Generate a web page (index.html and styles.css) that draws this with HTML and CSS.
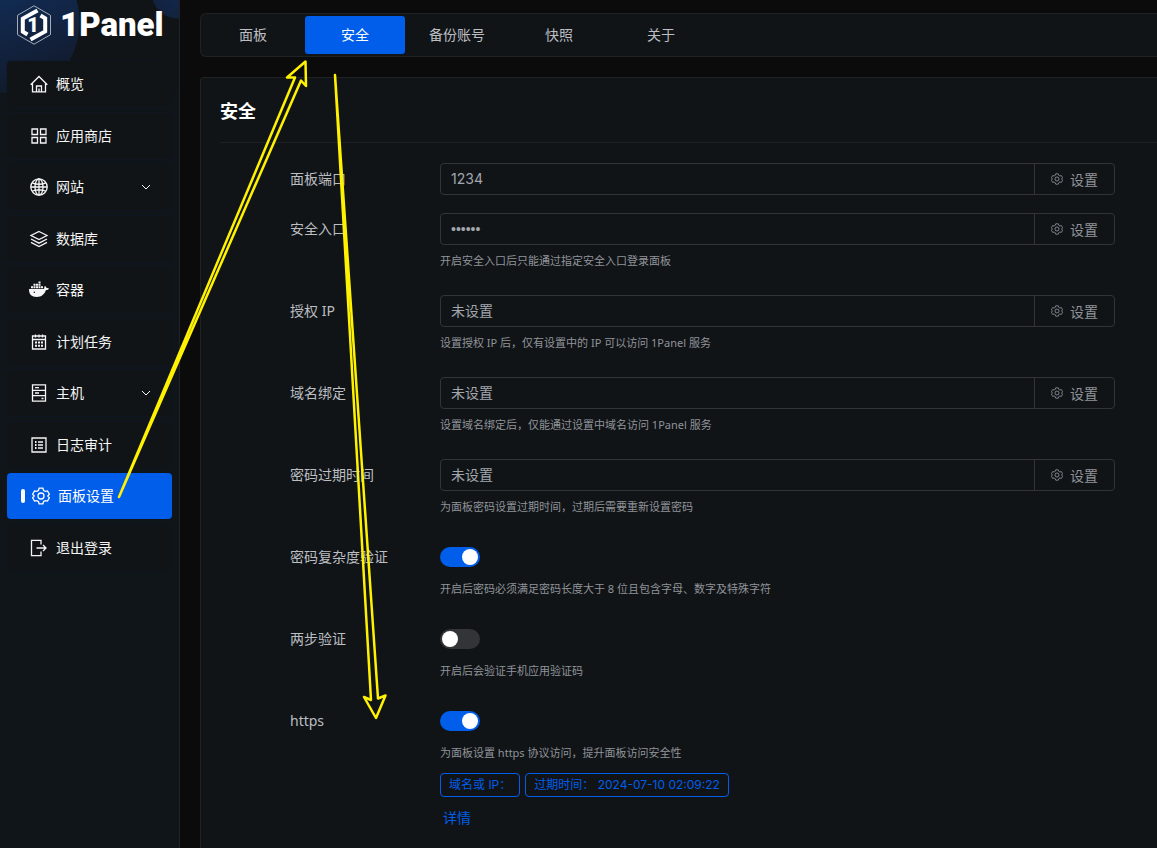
FILE: index.html
```html
<!DOCTYPE html>
<html lang="zh-CN">
<head>
<meta charset="utf-8">
<title>1Panel</title>
<link rel="stylesheet" href="styles.css">
</head>
<body>
<svg class="sprite" aria-hidden="true">
  <symbol id="gear" viewBox="0 0 18 18"><path d="M7.1 1.2h3.8l.7 2.3 1.6.9 2.3-.5 1.9 3.3-1.6 1.8 1.6 1.8-1.9 3.3-2.3-.5-1.6.9-.7 2.3H7.1l-.7-2.3-1.6-.9-2.3.5-1.9-3.3L2.200 9 .6 7.200l1.900-3.300 2.300.5 1.600-.9z"/><circle cx="9" cy="9" r="3"/></symbol>
  <symbol id="chevron" viewBox="0 0 10 10"><path d="M1 3l4 4 4-4"/></symbol>
</svg>
<div class="layout">
  <aside class="sidebar">
    <div class="logo">
      <svg class="logo-mark" viewBox="0 0 36 40" role="img" aria-label="logo">
        <path class="thin" d="M18 .8l16.500 9.500v19.400L18 39.200 1.500 29.700V10.300z"/>
        <path class="band" d="M21.500 5.500L6.800 13.600v13l4.700 2.900M14.500 34.500l14.700-8.100v-13l-4.700-2.900"/>
        <text x="17" y="27" text-anchor="middle">1</text>
      </svg>
      <span class="logo-text">1Panel</span>
    </div>
    <nav class="menu">
      <a href="#" class="item"><svg class="icon" viewBox="0 0 18 18"><path d="M.7 9.700L9 1.500l8.300 8.200M2.500 8.500v8.300h13V8.500M6.500 16.800v-5.800h5v5.800M9 13.500v3"/></svg>概览</a>
      <a href="#" class="item"><svg class="icon" viewBox="0 0 18 18"><path d="M2 2h5.500v5.500H2zM10.500 2H16v5.500h-5.500zM2 10.500h5.500V16H2zM10.500 10.500H16V16h-5.500z"/></svg>应用商店</a>
      <a href="#" class="item"><svg class="icon" viewBox="0 0 18 18"><circle cx="9" cy="9" r="8.200"/><ellipse cx="9" cy="9" rx="4" ry="8.200"/><path d="M9 .8v16.400M.8 9h16.400M2.200 4.800c4 1.700 9.600 1.700 13.600 0M2.200 13.200c4-1.700 9.600-1.700 13.600 0"/></svg>网站<svg class="chevron"><use href="#chevron"/></svg></a>
      <a href="#" class="item"><svg class="icon" viewBox="0 0 18 18"><path d="M9 1.500l8 4-8 4-8-4zM1 9l8 4.200L17 9M1 12.300l8 4.200 8-4.200"/></svg>数据库</a>
      <a href="#" class="item"><svg class="icon solid" viewBox="0 0 18 18"><path d="M-1 8h14.500c.8-.2 1-1 .7-2l.8-1c1 .6 1.400 1.300 1.500 2 .9-.2 1.800 0 2.500.4-.5 1.200-1.600 1.700-3 1.700C14.500 13.500 11.500 16 6.800 16 1.500 16-1.300 13-1 8z"/><path d="M1 5.200h2v2H1zM3.500 5.200h2v2h-2zM6 5.200h2v2H6zM8.500 5.200h2v2h-2zM11 5.200h2v2h-2zM3.500 2.700h2v2h-2zM6 2.700h2v2H6zM8.500 2.700h2v2h-2zM8.500.4h2v1.800h-2z"/><circle class="eye" cx="4.300" cy="11.200" r=".7"/></svg>容器</a>
      <a href="#" class="item"><svg class="icon" viewBox="0 0 18 18"><path d="M2.500 3h13v13h-13zM2.500 6.500h13M5.500 1.500v3M9 1.500v3M12.500 1.500v3"/><path class="dots" d="M5 9.500h2M8 9.500h2M11 9.500h2M5 12.700h2M8 12.700h2M11 12.700h2"/></svg>计划任务</a>
      <a href="#" class="item"><svg class="icon" viewBox="0 0 18 18"><path d="M2.500.8h13v16.400h-13zM2.500 6.300h13M2.500 11.700h13M5 3.600h4M5 9h4M11.500 14.500h2"/></svg>主机<svg class="chevron"><use href="#chevron"/></svg></a>
      <a href="#" class="item"><svg class="icon" viewBox="0 0 18 18"><path d="M2 2h14v14H2zM8 6h5M8 9h5M8 12h5"/><path class="dots" d="M5 6h1.500M5 9h1.500M5 12h1.500"/></svg>日志审计</a>
      <a href="#" class="item active" aria-current="page"><svg class="icon"><use href="#gear"/></svg>面板设置</a>
      <a href="#" class="item"><svg class="icon" viewBox="0 0 18 18"><path d="M11 5.500V1.300H1.500v15.400H11v-4.200M6.500 9H16M13 6l3 3-3 3"/></svg>退出登录</a>
    </nav>
  </aside>
  <main class="content">
    <nav class="tabs">
      <button type="button" class="tab">面板</button>
      <button type="button" class="tab selected">安全</button>
      <button type="button" class="tab">备份账号</button>
      <button type="button" class="tab">快照</button>
      <button type="button" class="tab">关于</button>
    </nav>
    <section class="card">
      <h1 class="title">安全</h1>
      <form class="form">
        <div class="row">
          <label for="port">面板端口</label>
          <div class="field"><input id="port" class="number" type="text" value="1234" readonly><button type="button"><svg><use href="#gear"/></svg>设置</button></div>
        </div>
        <div class="row">
          <label for="entrance">安全入口</label>
          <div class="field"><input id="entrance" class="secret" type="password" value="123456" readonly><button type="button"><svg><use href="#gear"/></svg>设置</button></div>
          <p class="hint">开启安全入口后只能通过指定安全入口登录面板</p>
        </div>
        <div class="row">
          <label for="ip">授权 IP</label>
          <div class="field"><input id="ip" type="text" value="未设置" readonly><button type="button"><svg><use href="#gear"/></svg>设置</button></div>
          <p class="hint">设置授权 IP 后，仅有设置中的 IP 可以访问 1Panel 服务</p>
        </div>
        <div class="row">
          <label for="domain">域名绑定</label>
          <div class="field"><input id="domain" type="text" value="未设置" readonly><button type="button"><svg><use href="#gear"/></svg>设置</button></div>
          <p class="hint">设置域名绑定后，仅能通过设置中域名访问 1Panel 服务</p>
        </div>
        <div class="row">
          <label for="expire">密码过期时间</label>
          <div class="field"><input id="expire" type="text" value="未设置" readonly><button type="button"><svg><use href="#gear"/></svg>设置</button></div>
          <p class="hint">为面板密码设置过期时间，过期后需要重新设置密码</p>
        </div>
        <div class="row">
          <label for="complex">密码复杂度验证</label>
          <div class="toggle"><input id="complex" class="switch" type="checkbox" role="switch" checked></div>
          <p class="hint">开启后密码必须满足密码长度大于 8 位且包含字母、数字及特殊字符</p>
        </div>
        <div class="row">
          <label for="mfa">两步验证</label>
          <div class="toggle"><input id="mfa" class="switch" type="checkbox" role="switch"></div>
          <p class="hint">开启后会验证手机应用验证码</p>
        </div>
        <div class="row">
          <label for="https">https</label>
          <div class="toggle"><input id="https" class="switch" type="checkbox" role="switch" checked></div>
          <p class="hint">为面板设置 https 协议访问，提升面板访问安全性</p>
          <div class="tags"><span class="tag">域名或 IP：</span><span class="tag">过期时间： 2024-07-10 02:09:22</span></div>
          <a href="#" class="detail">详情</a>
        </div>
      </form>
    </section>
  </main>
</div>
<svg class="arrows" width="400" height="730" viewBox="0 0 400 730" aria-hidden="true">
  <path d="M119 497L295 77.500 287 77.500 305.500 61.500 306 86 301 80.500z"/>
  <path d="M335 75L371 700 364 697 376 718 385.500 695.500 378 698.500z"/>
</svg>
</body>
</html>
```
FILE: styles.css
```css
* { box-sizing: border-box; }

body {
  margin: 0;
  background: #0b0b0b;
  color: #bcbec2;
  font: 14px/20px "Noto Sans", "Noto Sans CJK SC", sans-serif;
  overflow: hidden;
}

a { text-decoration: none; }
button, input { font: inherit; }
.sprite { position: absolute; width: 0; height: 0; }
svg { fill: none; stroke: currentColor; stroke-width: 1.3; overflow: visible; }

.layout { display: flex; min-height: 100vh; }

.sidebar {
  flex: 0 0 180px;
  border-right: 1px solid #202224;
  background:
    radial-gradient(circle at 178px -8px, #12284e 0, #12233f 26px, transparent 27px) no-repeat 0 0 / 100% 93px,
    radial-gradient(circle at 0 22px, transparent 79px, #101417 80px) no-repeat 0 0 / 100% 93px,
    linear-gradient(160deg, #112b52, #12203a 40%, #101721 75%) no-repeat 0 0 / 100% 93px,
    #10151a;
}

.logo {
  display: flex;
  align-items: center;
  gap: 8px;
  height: 61px;
  padding: 0 0 12px 16px;
  color: #fff;
}
.logo-mark { width: 36px; height: 40px; flex: none; }
.logo-mark .thin { stroke-width: 1; stroke: #a3acb8; }
.logo-mark .band { stroke-width: 4; }
.logo-mark text { fill: #fff; stroke: none; font: 900 20px Roboto, sans-serif; }
.logo-text { font: 900 33px/48px Roboto, sans-serif; }

.menu { display: flex; flex-direction: column; padding: 0 7px; }
.item {
  position: relative;
  display: flex;
  align-items: center;
  gap: 8px;
  height: 46px;
  margin-bottom: 5px;
  padding: 0 21px 0 23px;
  border-radius: 4px;
  background: #101417;
  box-shadow: 0 0 2px #111c33;
  color: #f5f5f5;
}
.item:nth-child(odd) { margin-bottom: 6px; }
.icon { width: 18px; height: 18px; }
.icon.solid { fill: currentColor; stroke: none; }
.icon .eye { fill: #101417; }
.icon .dots { stroke-width: 2; }
.chevron { width: 10px; height: 10px; margin-left: auto; stroke-width: 1; }
.item.active { padding-left: 25px; background: #005eeb; color: #fff; box-shadow: none; }
.item.active::before {
  content: "";
  position: absolute;
  left: 14px;
  top: 16px;
  width: 4px;
  height: 14px;
  border-radius: 2px;
  background: #fff;
}

.content { flex: 1; min-width: 0; padding: 13px 0 0 20px; display: flex; flex-direction: column; gap: 20px; }

.tabs {
  display: flex;
  gap: 2px;
  height: 44px;
  padding: 2px;
  border: 1px solid #1f2225;
  border-right: 0;
  border-radius: 6px 0 0 6px;
  background: #101417;
}
.tab { width: 100px; height: 38px; padding: 0; border: 0; border-radius: 3px; background: none; color: #bcbec2; }
.tab.selected { background: #005eeb; color: #fff; }

.card {
  flex: 1;
  padding-left: 19px;
  border: 1px solid #1f2225;
  border-width: 1px 0 0 1px;
  border-radius: 4px 0 0 0;
  background: #101417;
}
.title { margin: 0; height: 65px; border-bottom: 1px solid #1e2124; color: #fff; font-size: 18px; line-height: 66px; font-weight: 700; }

.form { display: flex; flex-direction: column; gap: 18px; padding: 20px 42px 20px 70px; }
.row { display: grid; grid-template-columns: 150px 1fr; }
.row > label { line-height: 32px; }
.row > :not(label) { grid-column: 2; }
.field { display: flex; height: 32px; border: 1px solid #323438; border-radius: 4px; }
.field input {
  flex: 1;
  min-width: 0;
  padding: 0 10px;
  border: 0;
  outline: 0;
  background: none;
  color: #a3a6ad;
}
.field .number { font-family: Inter, sans-serif; }
.field .secret { font-family: "Liberation Sans", sans-serif; }
.field button {
  display: flex;
  align-items: center;
  justify-content: center;
  gap: 7px;
  width: 80px;
  padding: 2px 0 0;
  border: 0;
  border-left: 1px solid #323438;
  background: none;
  color: #909399;
}
.field button svg { width: 12px; height: 12px; margin-bottom: 2px; }

.hint { margin: 0; color: #909399; font-size: 11px; line-height: 32px; }

.toggle { display: flex; align-items: center; height: 32px; }
.switch {
  appearance: none;
  width: 40px;
  height: 20px;
  margin: 0;
  padding: 2px;
  border-radius: 10px;
  background: #323438;
}
.switch::before { content: ""; display: block; width: 16px; height: 16px; border-radius: 50%; background: #fff; }
.switch:checked { background: #005eeb; }
.switch:checked::before { margin-left: 20px; }

.tags { display: flex; gap: 5px; margin-top: 4px; }
.tag {
  height: 24px;
  padding: 0 8px;
  border: 1px solid #005eeb;
  border-radius: 4px;
  color: #005eeb;
  font: 12px/22px Inter, "Noto Sans CJK SC", sans-serif;
}
.detail { justify-self: start; margin: 11px 0 0 3px; color: #005eeb; }

.arrows { position: absolute; left: 0; top: 0; pointer-events: none; stroke: #fff200; stroke-width: 2.5; stroke-linejoin: round; }
```
